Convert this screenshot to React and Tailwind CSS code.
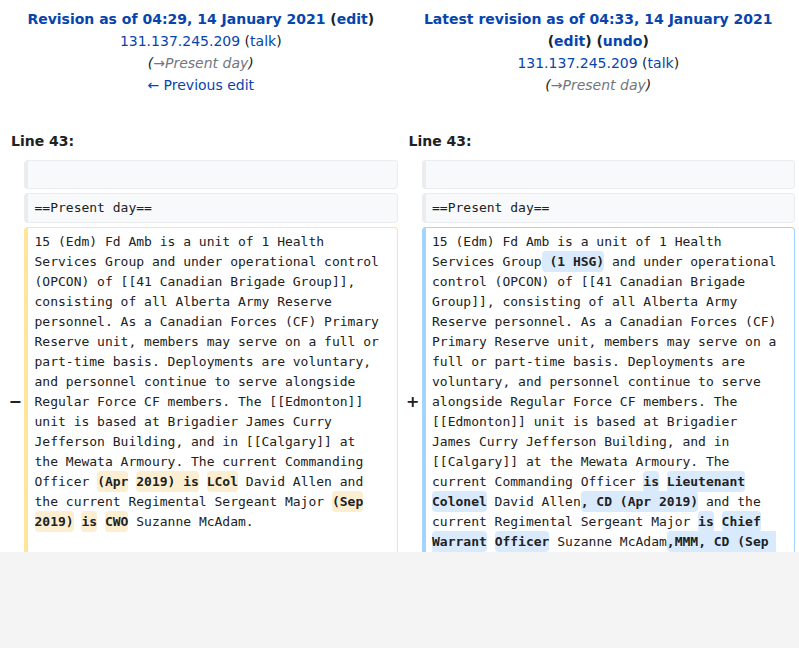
import React from "react";

const leftParts = [
  [
    "15 (Edm) Fd Amb is a unit of 1 Health Services Group and under operational control (OPCON) of [[41 Canadian Brigade Group]], consisting of all Alberta Army Reserve personnel. As a Canadian Forces (CF) Primary Reserve unit, members may serve on a full or part-time basis. Deployments are voluntary, and personnel continue to serve alongside Regular Force CF members. The [[Edmonton]] unit is based at Brigadier James Curry Jefferson Building, and in [[Calgary]] at the Mewata Armoury. The current Commanding Officer ",
    false,
  ],
  ["(Apr", true],
  [" ", false],
  ["2019) is", true],
  [" ", false],
  ["LCol", true],
  [" David Allen and the current Regimental Sergeant Major ", false],
  ["(Sep", true],
  [" ", false],
  ["2019)", true],
  [" ", false],
  ["is", true],
  [" ", false],
  ["CWO", true],
  [" Suzanne McAdam.", false],
];

const rightParts = [
  ["15 (Edm) Fd Amb is a unit of 1 Health Services Group", false],
  [" (1 HSG)", true],
  [
    " and under operational control (OPCON) of [[41 Canadian Brigade Group]], consisting of all Alberta Army Reserve personnel. As a Canadian Forces (CF) Primary Reserve unit, members may serve on a full or part-time basis. Deployments are voluntary, and personnel continue to serve alongside Regular Force CF members. The [[Edmonton]] unit is based at Brigadier James Curry Jefferson Building, and in [[Calgary]] at the Mewata Armoury. The current Commanding Officer ",
    false,
  ],
  ["is", true],
  [" ", false],
  ["Lieutenant", true],
  [" ", false],
  ["Colonel", true],
  [" David Allen", false],
  [", CD (Apr 2019)", true],
  [" and the current Regimental Sergeant Major ", false],
  ["is", true],
  [" ", false],
  ["Chief", true],
  [" ", false],
  ["Warrant", true],
  [" ", false],
  ["Officer", true],
  [" Suzanne McAdam", false],
  [",MMM, CD (Sep 2019)", true],
  [".", false],
];

const DiffText = ({ parts, added }) => (
  <div className="whitespace-pre-wrap break-words">
    {parts.map(([text, changed], i) =>
      changed ? (
        <span
          key={i}
          className={
            added
              ? "font-bold rounded-[4px] py-[3.25px] bg-[#d9eafd]"
              : "font-bold rounded-[4px] py-[3.25px] bg-[#fcefd1]"
          }
        >
          {text}
        </span>
      ) : (
        <span key={i}>{text}</span>
      )
    )}
  </div>
);

const Paren = ({ children }) => (
  <span className="text-[#202122]">
    (<a className="text-[#0645ad]">{children}</a>)
  </span>
);

const Comment = () => (
  <div className="italic text-[#202122]">
    (<span className="text-[#72777d]">→Present day</span>)
  </div>
);

const Marker = ({ sign }) => (
  <div className="flex items-center justify-end pt-[2px] font-bold text-[16px] text-[#202122]">
    <span className="-mr-[2px]">{sign}</span>
  </div>
);

const contextCell =
  "rounded-[4px] border border-l-4 border-[#eaecf0] bg-[#f8f9fa] py-[3.25px] pl-[6.5px] pr-[13px] font-['DejaVu_Sans_Mono',monospace] text-[13px] leading-[20.8px] text-[#202122]";

export default function App() {
  return (
    <div className="min-h-screen bg-[#f4f4f4]">
      <div className="h-[552px] overflow-hidden bg-white font-['DejaVu_Sans',sans-serif] text-[14px] leading-[22px] text-[#202122]">
        <div className="grid grid-cols-[16px_minmax(0,1fr)_16px_minmax(0,1fr)] gap-[4px] p-[4px]">
          {/* Titles */}
          <div className="col-span-2 px-[4px] pt-[4px] text-center">
            <div className="font-bold">
              <a className="text-[#0645ad]">Revision as of 04:29, 14 January 2021</a>{" "}
              <Paren>edit</Paren>
            </div>
            <div>
              <a className="text-[#0645ad]">131.137.245.209</a>{" "}
              <Paren>talk</Paren>
            </div>
            <Comment />
            <div>
              <a className="text-[#0645ad]">← Previous edit</a>
            </div>
          </div>
          <div className="col-span-2 px-[4px] pt-[4px] text-center">
            <div className="font-bold">
              <a className="text-[#0645ad]">Latest revision as of 04:33, 14 January 2021</a>{" "}
              <Paren>edit</Paren> <Paren>undo</Paren>
            </div>
            <div>
              <a className="text-[#0645ad]">131.137.245.209</a>{" "}
              <Paren>talk</Paren>
            </div>
            <Comment />
          </div>

          {/* Line numbers */}
          <div className="col-span-2 pb-[4px] pl-[7px] pt-[30px] font-bold">Line 43:</div>
          <div className="col-span-2 pb-[4px] pl-[7px] pt-[30px] font-bold">Line 43:</div>

          {/* Context rows */}
          <div />
          <div className={contextCell}>
            <br />
          </div>
          <div />
          <div className={contextCell}>
            <br />
          </div>

          <div />
          <div className={contextCell}>==Present day==</div>
          <div />
          <div className={contextCell}>==Present day==</div>

          {/* Changed paragraph */}
          <Marker sign="−" />
          <div className="rounded-[4px] border border-l-4 border-[#ffe49c] bg-white pb-[3.25px] pl-[6.5px] pr-[13px] pt-[4.25px] font-['DejaVu_Sans_Mono',monospace] text-[13px] leading-[20px] text-[#202122]">
            <DiffText parts={leftParts} />
          </div>
          <Marker sign="+" />
          <div className="rounded-[4px] border border-l-4 border-[#a3d3ff] bg-white pb-[3.25px] pl-[6.5px] pr-[13px] pt-[4.25px] font-['DejaVu_Sans_Mono',monospace] text-[13px] leading-[20px] text-[#202122]">
            <DiffText parts={rightParts} added />
          </div>
        </div>
      </div>
    </div>
  );
}
